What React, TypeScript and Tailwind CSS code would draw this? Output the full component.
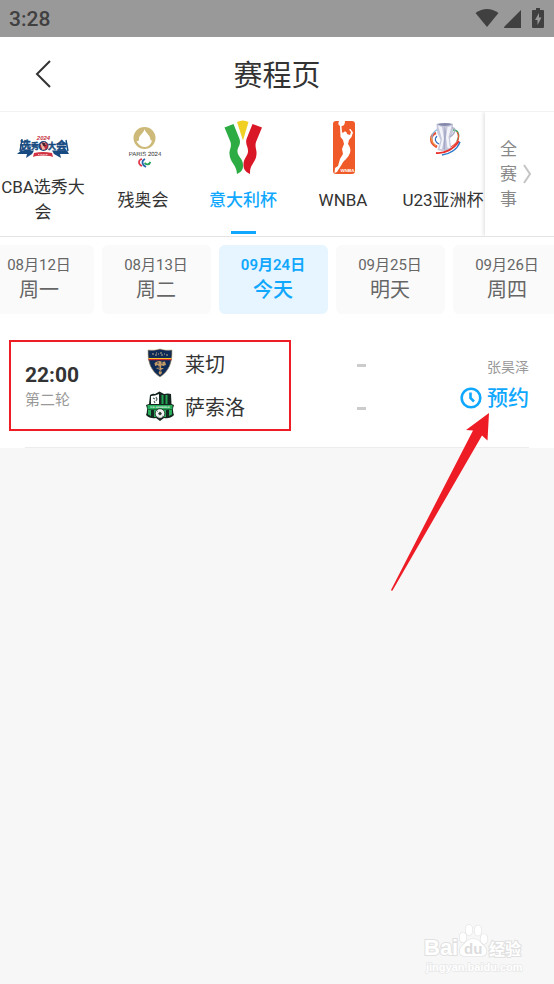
import React from "react";

const CJK = '"Noto Sans CJK SC"';

function CbaDraftLogo() {
  return (
    <svg width="52" height="26" viewBox="0 0 52 26" aria-hidden="true">
      <path d="M4 16.500 H17 L15 20 L9 24 L10 20 L0 20 Z M35 16.500 H50 L52 20 L43 20 L44 24 L37 20 Z" fill="#164a80" />
      <path d="M5 5 L3 17 M49 6 L51 17" stroke="#164a80" strokeWidth="1.400" />
      <g fontFamily='"Noto Sans CJK SC", sans-serif' fontWeight="700" fill="#164a80" stroke="#164a80" strokeWidth="0.5">
        <text x="3" y="16" fontSize="11">选</text>
        <text x="14" y="14.500" fontSize="8">秀</text>
        <text x="31" y="14.500" fontSize="8">大</text>
        <text x="39" y="16" fontSize="11">会</text>
      </g>
      <circle cx="26.500" cy="12" r="5" fill="#164a80" />
      <circle cx="27" cy="12" r="3.800" fill="#c42b3a" />
      <path d="M23.500 10 l4 -2 l2 3 l-3 1 l2 3 l-3 1 Z" fill="#efb9a6" />
      <path d="M25 9 h3 l1 3 h-3 Z" fill="#4a2230" />
      <text x="26.500" y="5.500" textAnchor="middle" fontFamily='"Liberation Sans", sans-serif' fontWeight="700" fontStyle="italic" fontSize="6" fill="#c42b3a">2024</text>
      <path d="M17 19 Q26 17 35 19 L36 23 L33 22 Q26 21 19 22 L16 23 Z" fill="#d23343" />
      <path d="M21 20.500 H31" stroke="#fff" strokeWidth="0.7" strokeDasharray="1 0.6" />
    </svg>
  );
}

function ParalympicsLogo() {
  return (
    <svg width="36" height="42" viewBox="0 0 36 42" aria-hidden="true">
      <circle cx="17.500" cy="12" r="11" fill="#cdb978" />
      <path d="M17.500 3 C18.500 7 23.500 9 23.500 14 C26 14 24.500 17 22.500 19 C21 20.500 19.500 21 17.500 21 C14 21 10.500 18 9.500 14.500 C10.500 15.500 12 15 12 13.500 C11.500 9 16.500 8 17.500 3 Z" fill="#fff" />
      <text x="18" y="29.500" textAnchor="middle" fontFamily='"Liberation Sans", sans-serif' fontSize="6" textRendering="geometricPrecision" fill="#333">PARIS 2024</text>
      <path d="M15 33 C11 34 11 38 15 40" stroke="#e0374a" strokeWidth="1.700" fill="none" />
      <path d="M18 33 C14 35 15 39 19 41" stroke="#2465ae" strokeWidth="1.700" fill="none" />
      <path d="M17.500 37 C20 39 22 39 23.500 36" stroke="#24a35a" strokeWidth="1.700" fill="none" />
    </svg>
  );
}

function CoppaItaliaLogo() {
  return (
    <svg width="40" height="54" viewBox="0 0 40 54" aria-hidden="true">
      <path d="M14 2 Q20 -1 25.500 2 L20 20.500 Z" fill="#f0d025" />
      <path d="M1.500 7.500 L10.500 4 L16.500 19 C18.500 25 14 27 14.500 32 C15 37 20.500 39 20 46 C20 50 18 52 14 54 C13.500 44 7 43 6.500 34 C6 30 9 27 7.500 22 Z" fill="#2cac43" />
      <path d="M39 7.500 L29.500 4 L23.500 19 C22 25 25.500 27 25 32 C24 37 20 39 20.500 46 C21 50 23 52 27 54 C26.500 44 33 43 33.500 34 C34 30 31.500 27 33 22 Z" fill="#d91727" />
    </svg>
  );
}

function WnbaLogo() {
  return (
    <svg width="22" height="53" viewBox="0 0 22 53" aria-hidden="true">
      <rect width="22" height="53" rx="3" fill="#f05a28" />
      <path d="M6 0 H12 C12 3 11 5 8.500 5 L9 11 C9 12 10 12 11 11 C12.500 10 14 11 14 13 L17 14 L18 11 L16 8.500 L17.500 8 L20 11.500 L18.500 16 L16 19 L15 23 C18 27 18 31 16 34 C15 37 11 39 9 43 L4 51 L1.500 52 L2 47 L5 45 L7 38 L10 33 L9 28 L11 23 L10 19 L7.500 16 L7 5 C5 4 5 2 6 0 Z" fill="#fff" />
      <text x="14.500" y="51" textAnchor="middle" fontFamily='"Liberation Sans", sans-serif' fontWeight="700" fontSize="4.500" textRendering="geometricPrecision" fill="#fff">WNBA</text>
    </svg>
  );
}

function AsianCupLogo() {
  return (
    <svg width="32" height="34" viewBox="0 0 32 34" aria-hidden="true">
      <path d="M7 11 C1 13 0 21 8 25" stroke="#e9503a" strokeWidth="2.600" fill="none" />
      <path d="M9 7 C4 10 2 13 3 17" stroke="#7fb9e0" strokeWidth="1.200" fill="none" />
      <path d="M8 14 C5 17 6 20 10 22" stroke="#2f6dc0" strokeWidth="1.200" fill="none" />
      <path d="M2 15 C2 19 4 22 7 24" stroke="#f0b13c" strokeWidth="0.900" fill="none" />
      <path d="M24 8 C30 8 31 14 28 19" stroke="#36a65e" strokeWidth="1.400" fill="none" />
      <path d="M28 10 C32 16 28 22 20 26" stroke="#e9503a" strokeWidth="1.200" fill="none" />
      <path d="M7.500 2 C12 3.500 19 3.500 24 2 L24 10 L21 17 L22.500 28 C18 30 12 29 8.500 28 L11.500 18 L8 10 Z" fill="#c6c8db" />
      <path d="M9 3.500 L13 5 L15 17 L13 27 L10.500 27 L13 17 Z M18.500 5 L22.500 4 L19.500 15 L21 26 L18.500 26 L17 16 Z" fill="#f3f3fa" />
      <path d="M15.500 4 L17 10 L16 28 L14.500 27 Z" fill="#a4a8c6" />
      <path d="M7.500 2 C13 4.500 18 4.500 24 2 C19 0.500 13 0.500 7.500 2 Z" fill="#8488aa" />
      <path d="M23 6 C28 5 26 12 21 15" stroke="#a9acc4" strokeWidth="1.200" fill="none" />
      <path d="M7 31 C15 32 25 27 30 19" stroke="#e8312b" strokeWidth="1.800" fill="none" />
      <path d="M13 33 C20 32 28 28 31 20" stroke="#2e7ac8" strokeWidth="1.500" fill="none" />
    </svg>
  );
}

function LecceCrest() {
  return (
    <svg width="26" height="30" viewBox="0 0 26 30" aria-hidden="true">
      <path d="M1 2 Q7 3 13 1 Q19 3 25 2 Q26 21 13 29 Q0 21 1 2 Z" fill="#0e2a57" stroke="#b79a6c" strokeWidth="0.600" />
      <path d="M1.500 10 H24.500 V11 H1.500 Z" fill="#f4c52c" />
      <path d="M1.500 11 H24.500 V12.200 H1.500 Z" fill="#d8262c" />
      <path d="M5 6 h2 M8 7 h2 M11 6 h1 M13 5 h2 M14 7 h2 M17 6 h1 M19 7 h2 M9 5 h1" stroke="#cdbb91" strokeWidth="0.900" fill="none" />
      <path d="M13 13 L15 14 L18 13.500 L19 17 L16 18 L14.500 17 L14 20 L17 20 L14 22 L15 25 L13 27 L11.500 25 L13 22 L9 20 L12 19.500 L11 17 L8 18 L7.500 15 L10 13.500 Z" fill="#c39a65" />
      <path d="M10 15 h2 M14 15 h2 M12 18 v3 M13 23 h1" stroke="#0e2a57" strokeWidth="0.800" />
    </svg>
  );
}

function SassuoloCrest() {
  return (
    <svg width="28" height="30" viewBox="0 0 28 30" aria-hidden="true">
      <path d="M4 4 Q7 2 9 3 L13.500 0.500 L18 3 Q22 2 25 3 L25.500 13 L28 14 Q26 19 28 24 Q24 28 18 27 L14 30 L10 27 Q4 28 0 24 Q2 19 0 14 L3 13 Z" fill="#15251f" />
      <path d="M5 5 L9 4.500 L13 3 L13 13 L5 13 Z" fill="#fff" />
      <path d="M7 7 l2 1 M10 6 l1 2 l-1 2 M8 10 l1 2" stroke="#51625c" strokeWidth="1.200" fill="none" />
      <path d="M15.500 4 h2 v9 h-2 Z M19.500 4 h2 v9 h-2 Z" fill="#21a453" />
      <rect x="1.500" y="14" width="25" height="4.500" fill="#28ad5a" />
      <text x="14" y="17.300" textAnchor="middle" fontFamily='"Liberation Sans", sans-serif' fontWeight="700" fontSize="2.500" textRendering="geometricPrecision" fill="#fff">U.S. SASSUOLO</text>
      <path d="M2 19 H5 V25 L2 23.500 Z M8 19 H11 V26 H8 Z M17 19 H20 V26 H17 Z M23 19 H26 V23.500 L23 25 Z" fill="#28ad5a" />
      <circle cx="14" cy="22.500" r="4.800" fill="#f0f3f1" stroke="#15251f" strokeWidth="0.800" />
      <path d="M14 21 l1.500 1.200 l-0.700 1.600 h-1.600 l-0.700 -1.600 Z M11 20.500 l1 -0.500 M17 25 l-1 0.500 M12 25.500 l-0.500 -0.500" fill="#283630" stroke="#283630" strokeWidth="0.600" />
    </svg>
  );
}

function StatusBar() {
  return (
    <div className="flex h-[37px] items-center justify-between bg-[#999] px-[9px] text-[#404040]">
      <span className="text-[21px] leading-6 font-medium">3:28</span>
      <div className="flex items-center gap-[5px] pb-[2px]">
        <svg width="24" height="20" viewBox="0 0 24 20" fill="currentColor" aria-hidden="true">
          <path d="M0.500 5 Q12 -3 23.500 5 L12 19 Z" />
        </svg>
        <svg width="17" height="20" viewBox="0 0 17 20" fill="currentColor" aria-hidden="true">
          <path d="M17 2 V20 H1 Q-0.500 20 0.500 18.500 Z" />
        </svg>
        <svg className="mr-px ml-[6px]" width="12" height="20" viewBox="0 0 12 20" aria-hidden="true">
          <path d="M4 0 H8 V2 H11 Q12 2 12 3 V19 Q12 20 11 20 H1 Q0 20 0 19 V3 Q0 2 1 2 H4 Z" fill="currentColor" />
          <path d="M7 5 L3 12 H5.500 V17 L9.500 9.500 H7 Z" fill="#999" />
        </svg>
      </div>
    </div>
  );
}

const leagues = [
  { name: "CBA选秀大会", logo: <CbaDraftLogo />, box: "h-[70px] items-center" },
  { name: "残奥会", logo: <ParalympicsLogo />, box: "h-[70px] items-center pl-1" },
  { name: "意大利杯", logo: <CoppaItaliaLogo />, box: "h-[70px] items-center" },
  { name: "WNBA", logo: <WnbaLogo />, box: "h-[70px] items-center pl-[2px]" },
  { name: "U23亚洲杯", logo: <AsianCupLogo />, box: "h-[54px] items-center pl-1" },
];

function LeagueTabs() {
  return (
    <nav className="flex h-[125px] border-b border-[#e4e4e4]" aria-label="赛事">
      <div className="flex min-w-0 flex-1 overflow-hidden">
        {leagues.map((l, i) => (
          <button
            key={l.name}
            className={`flex w-[100px] shrink-0 flex-col items-center ${i === 0 ? "-ml-[7px]" : ""}`}
          >
            <span className="flex h-[63px] w-full items-start justify-center">
              <span className={`flex ${l.box}`}>{l.logo}</span>
            </span>
            <span
              className={`flex h-[50px] items-center justify-center px-2 text-[17px] leading-[25px] ${
                i === 2 ? "font-medium text-[#10a8ff]" : "text-[#333]"
              } ${i === 0 ? "" : "whitespace-nowrap"}`}
            >
              {l.name}
            </span>
            {i === 2 && <span className="mt-[6px] h-[3px] w-[25px] bg-[#10a8ff]" />}
          </button>
        ))}
      </div>
      <button className="z-10 flex w-[69px] shrink-0 items-center gap-[6px] pl-[15px] text-[#888] shadow-[-1px_0_4px_rgba(0,0,0,0.14)] [clip-path:inset(0_0_0_-5px)]">
        <span className="w-[17px] text-[17px] leading-[25px]">全赛事</span>
        <svg width="9" height="20" viewBox="0 0 9 20" fill="none" stroke="#c4c4c4" strokeWidth="2" aria-hidden="true">
          <path d="M1 1 L7 10 L1 19" />
        </svg>
      </button>
    </nav>
  );
}

const days = [
  { date: "08月12日", day: "周一" },
  { date: "08月13日", day: "周二" },
  { date: "09月24日", day: "今天", active: true },
  { date: "09月25日", day: "明天" },
  { date: "09月26日", day: "周四" },
];

function DateTabs() {
  return (
    <nav className="flex gap-2 overflow-hidden py-2" aria-label="日期">
      {days.map((d, i) => (
        <button
          key={d.date}
          className={`flex h-[69px] w-[109px] shrink-0 flex-col items-center justify-center rounded-md pr-px pb-px ${
            i === 0 ? "-ml-[15px]" : ""
          } ${d.active ? "bg-[#e6f5ff] font-medium text-[#10a8ff]" : "bg-[#fafafa] text-[#666]"}`}
        >
          <span className={`text-[15px] leading-[22px] ${d.active ? "font-semibold" : ""}`}>{d.date}</span>
          <span className="text-[20px] leading-7">{d.day}</span>
        </button>
      ))}
    </nav>
  );
}

function TeamLine({ name, crest }: { name: string; crest: React.ReactNode }) {
  return (
    <div className="flex h-[43px] items-center">
      <span className="flex w-[30px] justify-center pb-[3px]">{crest}</span>
      <span className="ml-[10px]">{name}</span>
    </div>
  );
}

function MatchRow() {
  return (
    <section className="relative bg-white px-[25px]">
      <div className="flex h-[126px] border-b border-[#ececec] pt-[20px]">
        <div className="w-[120px] pt-[20px]">
          <div className="text-[21px] leading-[26px] font-bold text-[#333]">22:00</div>
          <div className="text-[15px] leading-6 text-[#999]">第二轮</div>
        </div>
        <div className="flex flex-1 flex-col pt-px text-[20px] text-[#333]">
          <TeamLine name="莱切" crest={<LecceCrest />} />
          <TeamLine name="萨索洛" crest={<SassuoloCrest />} />
        </div>
        <div className="flex w-[10px] flex-col">
          <div className="flex h-[43px] items-center pt-[3px]"><span className="h-[3px] w-[9px] bg-[#ccc]" /></div>
          <div className="flex h-[43px] items-center pt-[3px]"><span className="h-[3px] w-[9px] bg-[#ccc]" /></div>
        </div>
        <div className="flex w-[162px] flex-col items-end pt-[15px]">
          <span className="text-[14px] leading-5 text-[#999]">张昊泽</span>
          <button className="mt-[7px] flex items-center gap-[5px] text-[21px] leading-7 font-medium text-[#10a8ff]">
            <svg width="22" height="22" viewBox="0 0 22 22" fill="none" stroke="currentColor" strokeWidth="2.600" aria-hidden="true">
              <circle cx="11" cy="11" r="9.300" />
              <path d="M10.500 5.500 V11 L14 14.500" />
            </svg>
            预约
          </button>
        </div>
      </div>
      <div className="pointer-events-none absolute top-[18px] left-[9px] h-[91px] w-[282px] border-2 border-[#ee1c25]" />
      <svg className="pointer-events-none absolute top-[91px] right-[65px]" width="98" height="178" viewBox="0 0 98 178" fill="#ee1c25" aria-hidden="true">
        <path d="M98 0 L75 17 L82 17.500 L0 177 Q0.500 178 1.500 177.500 L91 22.500 L96.500 27.500 Z" />
      </svg>
    </section>
  );
}

function Watermark() {
  return (
    <div className="absolute right-[26px] bottom-[9px]" aria-hidden="true">
      <svg width="106" height="54" viewBox="0 0 106 54" fill="#fff" stroke="#e0e0e0" strokeWidth="1.200">
        <g fontFamily='"Liberation Sans", "Noto Sans CJK SC", sans-serif' fontWeight="700" paintOrder="stroke">
          <text x="2" y="34" fontSize="22" strokeWidth="2">Bai</text>
          <ellipse cx="41" cy="16.500" rx="3.500" ry="5" />
          <ellipse cx="47" cy="9" rx="3.500" ry="5.200" />
          <ellipse cx="56" cy="9.500" rx="3.500" ry="5.200" />
          <ellipse cx="62" cy="18" rx="3.500" ry="5" />
          <path d="M51 18 C44 18 44 22 40 25 C36 29 37 35 43 35 H59 C65 35 66 29 62 25 C58 22 58 18 51 18 Z" />
          <text x="42" y="33" fontSize="15" fill="#dcdcdc" stroke="none">du</text>
          <text x="67" y="34" fontSize="16" strokeWidth="2">经验</text>
          <text x="4" y="50" fontSize="11" strokeWidth="1.400" stroke="#e8e8e8">jingyan.baidu.com</text>
        </g>
      </svg>
    </div>
  );
}

export default function App() {
  return (
    <div
      className="relative flex min-h-screen flex-col overflow-hidden bg-[#f7f7f7]"
      style={{ fontFamily: `Roboto, ${CJK}, sans-serif` }}
      lang="zh-CN"
    >
      <StatusBar />
      <div className="bg-white">
        <header className="grid h-[75px] grid-cols-[1fr_auto_1fr] items-center border-b border-[#f2f2f2]">
          <button className="ml-[35px] w-[20px]" aria-label="返回">
            <svg width="17" height="28" viewBox="0 0 17 28" fill="none" stroke="#333" strokeWidth="2" aria-hidden="true">
              <path d="M15 1 L2 14 L15 27" />
            </svg>
          </button>
          <h1 className="pt-1 text-[29px] leading-10 text-[#333]">赛程页</h1>
        </header>
        <LeagueTabs />
        <DateTabs />
      </div>
      <MatchRow />
      <Watermark />
    </div>
  );
}
